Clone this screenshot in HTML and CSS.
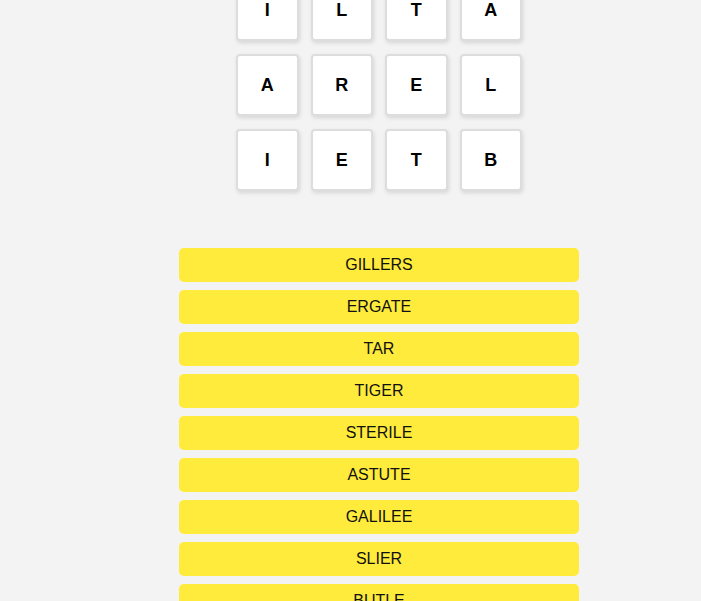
FILE: index.html
```html
<!DOCTYPE html>
<html>
<head>
<meta charset="utf-8">
<link rel="stylesheet" href="styles.css">
</head>
<body>
<main class="game">
  <div class="board">
    <div class="tile">I</div><div class="tile">L</div><div class="tile">T</div><div class="tile">A</div>
    <div class="tile">A</div><div class="tile">R</div><div class="tile">E</div><div class="tile">L</div>
    <div class="tile">I</div><div class="tile">E</div><div class="tile">T</div><div class="tile">B</div>
  </div>
  <ul class="words">
    <li class="word">GILLERS</li>
    <li class="word">ERGATE</li>
    <li class="word">TAR</li>
    <li class="word">TIGER</li>
    <li class="word">STERILE</li>
    <li class="word">ASTUTE</li>
    <li class="word">GALILEE</li>
    <li class="word">SLIER</li>
    <li class="word">BUTLE</li>
  </ul>
</main>
</body>
</html>
```
FILE: styles.css
```css
html, body {
  margin: 0;
  padding: 0;
  background: #f3f3f3;
  font-family: "Liberation Sans", Arial, sans-serif;
  overflow: hidden;
}
.game {
  width: 400px;
  margin-left: 179px;
  display: flex;
  flex-direction: column;
  align-items: center;
}
.board {
  margin-top: -21px;
  display: grid;
  grid-template-columns: repeat(4, 62.5px);
  grid-auto-rows: 62px;
  column-gap: 12px;
  row-gap: 13px;
}
.tile {
  box-sizing: border-box;
  background: #fff;
  border: 2px solid #dddddd;
  border-radius: 4px;
  box-shadow: 1px 2px 4px rgba(0, 0, 0, 0.12);
  display: flex;
  align-items: center;
  justify-content: center;
  font-weight: bold;
  font-size: 18px;
  color: #000;
}
.words {
  list-style: none;
  margin: 57px 0 0 0;
  padding: 0;
  width: 400px;
  display: flex;
  flex-direction: column;
  gap: 8px;
}
.word {
  height: 34px;
  background: #ffeb3b;
  border-radius: 5px;
  display: flex;
  align-items: center;
  justify-content: center;
  font-size: 16px;
  color: #111;
}
```
